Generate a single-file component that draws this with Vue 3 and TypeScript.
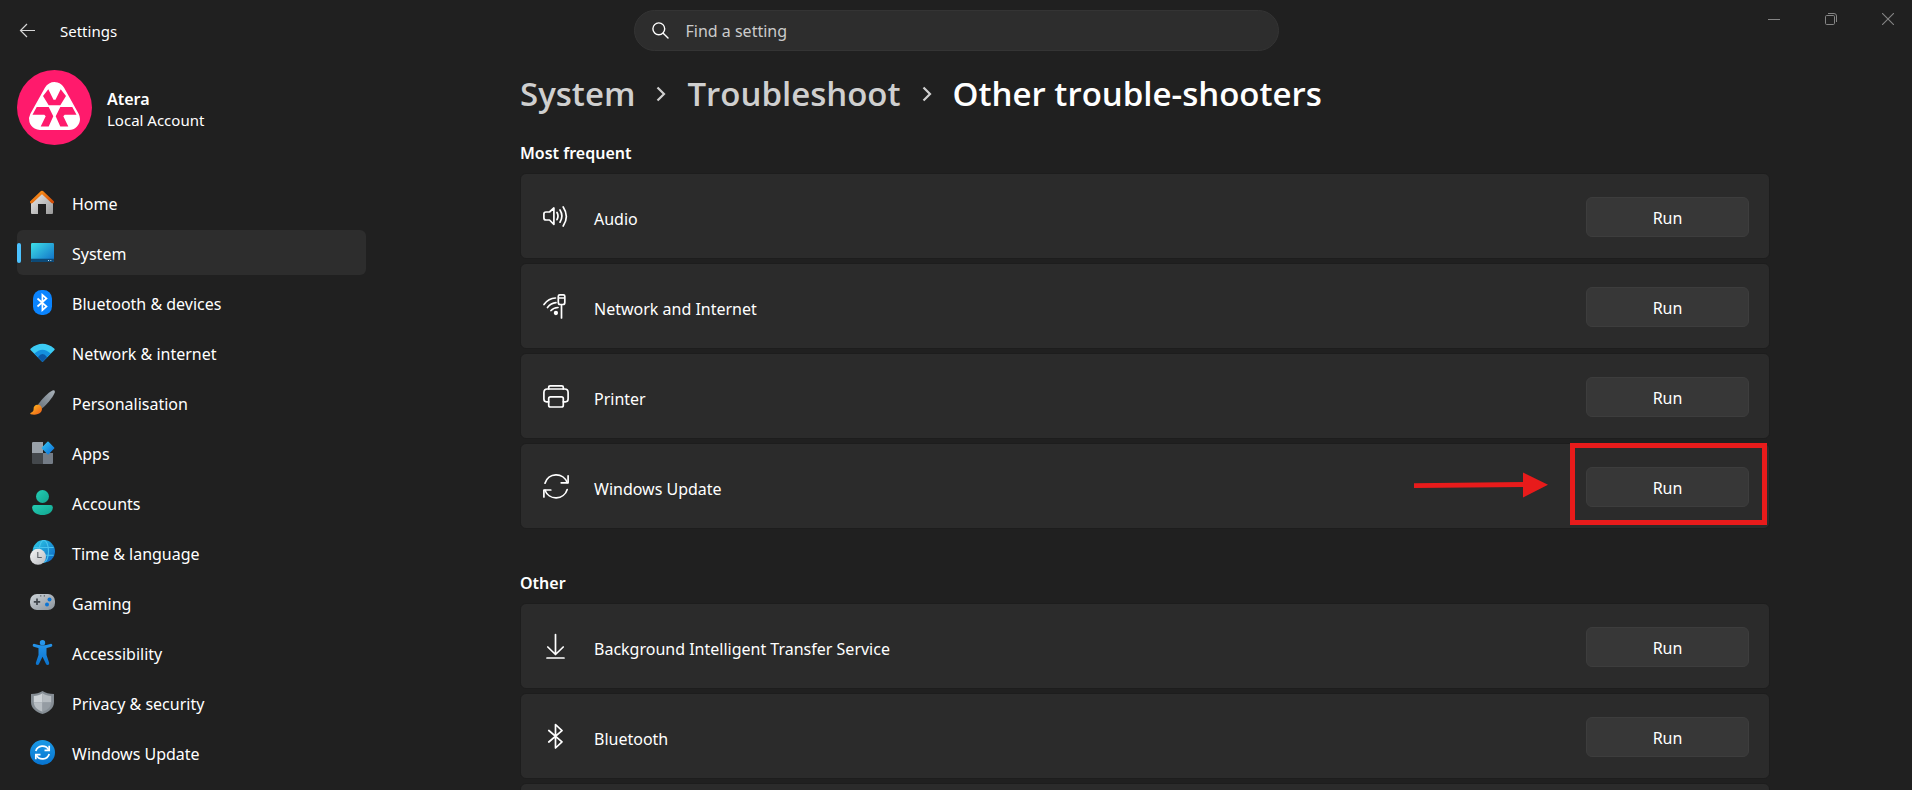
<script setup lang="ts">
import { ref } from 'vue'

interface NavItem {
  icon: string
  label: string
}

interface Group {
  title: string
  items: { icon: string; label: string; highlighted?: boolean }[]
  more?: boolean
}

const query = ref('')
const active = ref('System')

const navItems: NavItem[] = [
  { icon: 'home', label: 'Home' },
  { icon: 'system', label: 'System' },
  { icon: 'bluetooth', label: 'Bluetooth & devices' },
  { icon: 'network', label: 'Network & internet' },
  { icon: 'brush', label: 'Personalisation' },
  { icon: 'apps', label: 'Apps' },
  { icon: 'accounts', label: 'Accounts' },
  { icon: 'time', label: 'Time & language' },
  { icon: 'gaming', label: 'Gaming' },
  { icon: 'accessibility', label: 'Accessibility' },
  { icon: 'privacy', label: 'Privacy & security' },
  { icon: 'update', label: 'Windows Update' },
]

const groups: Group[] = [
  {
    title: 'Most frequent',
    items: [
      { icon: 'audio', label: 'Audio' },
      { icon: 'network', label: 'Network and Internet' },
      { icon: 'printer', label: 'Printer' },
      { icon: 'update', label: 'Windows Update', highlighted: true },
    ],
  },
  {
    title: 'Other',
    items: [
      { icon: 'download', label: 'Background Intelligent Transfer Service' },
      { icon: 'bluetooth', label: 'Bluetooth' },
    ],
    more: true,
  },
]
</script>

<template>
  <div class="window">
    <header class="titlebar">
      <div class="title">
        <button class="back" type="button" aria-label="Back">
          <svg width="17" height="15" viewBox="0 0 17 15" fill="none" stroke="#d6d6d6" stroke-width="1.2">
            <path d="M8 1 1.5 7.5 8 14M1.5 7.5H16" />
          </svg>
        </button>
        <span>Settings</span>
      </div>
      <label class="search">
        <svg width="17" height="17" viewBox="0 0 17 17" fill="none" stroke="#fff" stroke-width="1.4" stroke-linecap="round">
          <circle cx="6.8" cy="6.8" r="5.9" />
          <path d="M11.2 11.2 16 16" />
        </svg>
        <input v-model="query" type="text" placeholder="Find a setting" aria-label="Find a setting" />
      </label>
      <div class="controls">
        <button type="button" aria-label="Minimise">
          <svg width="12" height="12" viewBox="0 0 12 12"><path d="M0 6.5H12" stroke="#858585" /></svg>
        </button>
        <button type="button" aria-label="Restore">
          <svg width="12" height="12" viewBox="0 0 12 12" fill="none" stroke="#858585">
            <rect x=".5" y="2.5" width="9" height="9" rx="1.2" />
            <path d="M3 .5H9Q11.5 .5 11.5 3V9" />
          </svg>
        </button>
        <button type="button" aria-label="Close">
          <svg width="12" height="12" viewBox="0 0 12 12" stroke="#858585" stroke-width="1.1"><path d="M0 0 12 12M12 0 0 12" /></svg>
        </button>
      </div>
    </header>

    <div class="body">
      <aside class="sidebar">
        <div class="account">
          <svg class="avatar" width="75" height="75" viewBox="0 0 75 75">
            <circle cx="37.5" cy="37.5" r="37.5" fill="#ff1a6c" />
            <path d="M37.5 23 23 49H52Z" fill="#fff" stroke="#fff" stroke-width="22" stroke-linejoin="round" />
            <g fill="#ff1a6c">
              <path d="M31.3 19.3 26 26 31.7 35.3H43.3L49 26 43.7 19.3 38.5 29.7H36.5Z" />
              <path d="M19.7 37H31.7L36.3 46.3 31.7 56.5H23.7L28.7 46.3 27.3 44.7H15.5Z" />
              <path d="M55.3 37H43.3L38.7 46.3 43.3 56.5H51.3L46.3 46.3 47.7 44.7H59.5Z" />
            </g>
          </svg>
          <div class="account-text">
            <strong>Atera</strong>
            <span>Local Account</span>
          </div>
        </div>

        <nav class="nav" aria-label="Settings">
          <a
            v-for="item in navItems"
            :key="item.label"
            href="#"
            :class="['nav-item', { active: item.label === active }]"
            @click.prevent="active = item.label"
          >
            <svg width="25" height="25" viewBox="0 0 25 25" fill="none">
              <template v-if="item.icon === 'home'">
                <defs>
                  <linearGradient id="homeWall" x1="0" y1="0" x2="1" y2="1"><stop stop-color="#eee" /><stop offset="1" stop-color="#999" /></linearGradient>
                  <linearGradient id="homeRoof" x1="0" y1="0" x2="1" y2="1"><stop stop-color="#ff9a1c" /><stop offset="1" stop-color="#d24a05" /></linearGradient>
                </defs>
                <path d="M1 11.5 12 2 23 11.5V23Q23 24 22 24H16V14H8V24H2Q1 24 1 23Z" fill="url(#homeWall)" />
                <path d="M1.5 12 12 2.2 22.5 12" stroke="url(#homeRoof)" stroke-width="3" stroke-linecap="round" stroke-linejoin="round" />
              </template>
              <template v-else-if="item.icon === 'system'">
                <defs>
                  <linearGradient id="screen" x1="0" y1="0" x2="1" y2="1"><stop stop-color="#3ee0e8" /><stop offset="1" stop-color="#0f6cc6" /></linearGradient>
                </defs>
                <rect x="1" y="3" width="23" height="19" rx="1.2" fill="url(#screen)" />
                <path d="M1 18.7H24V20.8Q24 22 22.8 22H2.2Q1 22 1 20.8Z" fill="#0d4a77" />
                <path d="M18 20.5h1M20.3 20.5h1" stroke="#b9dcf2" />
              </template>
              <template v-else-if="item.icon === 'bluetooth'">
                <rect x="3" width="19" height="25" rx="8.5" fill="#0a84ff" />
                <path d="M7.5 8.5 16.5 16.5 12.4 20.2V4.8L16.5 8.5 7.5 16.5" stroke="#fff" stroke-width="1.7" />
              </template>
              <template v-else-if="item.icon === 'network'">
                <path d="M12.5 22 .8 10.2Q-.2 9.2 .8 8.4Q12.5 -.8 24.2 8.4Q25.2 9.2 24.2 10.2Z" fill="#3ccbf4" />
                <path d="M12.5 22 4.3 13.6Q12.5 5.8 20.7 13.6Z" fill="#1490df" />
                <path d="M12.5 22 7.9 17.2Q12.5 11 17.1 17.2Z" fill="#0b59a8" />
              </template>
              <template v-else-if="item.icon === 'brush'">
                <defs>
                  <linearGradient id="handle" x1="1" y1="0" x2="0" y2="1"><stop stop-color="#a9b2ba" /><stop offset="1" stop-color="#68727b" /></linearGradient>
                  <linearGradient id="paint" x1="0" y1="0" x2="1" y2="1"><stop stop-color="#ffc021" /><stop offset="1" stop-color="#ee5a18" /></linearGradient>
                </defs>
                <path d="M8 14.5C12 9 18 2.5 22.5 .4Q25.5 -.2 24.7 2.8C22.5 8 16.5 15 12 18.5Z" fill="url(#handle)" />
                <path d="M3.6 19C3.3 15.5 6.5 13.8 9.3 15.1 12 16.5 12.8 19.5 11 22 8.5 25 3.5 25 .8 24.2 0 23.8 .2 23 1 22.7 2.8 22 3.7 21 3.6 19Z" fill="url(#paint)" />
              </template>
              <template v-else-if="item.icon === 'apps'">
                <defs>
                  <linearGradient id="diamond" x1="0" y1="0" x2="1" y2="1"><stop stop-color="#35c4f4" /><stop offset="1" stop-color="#0a6fd8" /></linearGradient>
                </defs>
                <path d="M2.8 2H13V13H2V2.8Z" fill="#99a1a9" />
                <path d="M2 13H13V24H2.8L2 23.2Z" fill="#44484c" />
                <path d="M13 13H23V23.2L22.2 24H13Z" fill="#747c86" />
                <path d="M18 2.4 23.6 8 18 13.6 12.4 8Z" fill="url(#diamond)" stroke="url(#diamond)" stroke-width="1.6" stroke-linejoin="round" />
              </template>
              <template v-else-if="item.icon === 'accounts'">
                <defs>
                  <linearGradient id="person" x1="0" y1="0" x2="1" y2="1"><stop stop-color="#24cdb4" /><stop offset="1" stop-color="#12a48f" /></linearGradient>
                </defs>
                <circle cx="12.5" cy="6.5" r="6.5" fill="url(#person)" />
                <path d="M4.5 15H20.5Q22.8 15 22.8 17.3C22.8 22.5 18 25 12.5 25S2.2 22.5 2.2 17.3Q2.2 15 4.5 15Z" fill="url(#person)" />
              </template>
              <template v-else-if="item.icon === 'time'">
                <defs>
                  <linearGradient id="globe" x1="0" y1="0" x2="1" y2="1"><stop stop-color="#2fd0e6" /><stop offset="1" stop-color="#0a5fc4" /></linearGradient>
                  <linearGradient id="clock" x1="0" y1="0" x2="1" y2="1"><stop stop-color="#f6f6f6" /><stop offset="1" stop-color="#b9bcc0" /></linearGradient>
                </defs>
                <circle cx="13.8" cy="11.3" r="11.2" fill="url(#globe)" />
                <g stroke="#48c3ee" stroke-width="1.1">
                  <ellipse cx="13.8" cy="11.3" rx="4.7" ry="11" />
                  <path d="M4 7.5H23.6M6 15.3H23.6" />
                </g>
                <circle cx="8" cy="16.8" r="8" fill="url(#clock)" />
                <path d="M7.8 12V17.5H11.8" stroke="#5d6267" stroke-width="1.1" />
              </template>
              <template v-else-if="item.icon === 'gaming'">
                <defs>
                  <linearGradient id="pad" x1="0" y1="0" x2="1" y2="1"><stop stop-color="#cdd3d8" /><stop offset="1" stop-color="#8b939b" /></linearGradient>
                </defs>
                <rect y="4" width="25" height="16" rx="7" fill="url(#pad)" />
                <path d="M7 8.5V15M3.8 11.8H10.2" stroke="#40464c" stroke-width="1.7" />
                <path d="M10.3 5.8h1M13.8 5.8h1" stroke="#40464c" stroke-width="1.2" />
                <circle cx="19.5" cy="9.5" r="2" fill="#0c74d4" />
                <circle cx="17" cy="14.5" r="2" fill="#0c74d4" />
              </template>
              <template v-else-if="item.icon === 'accessibility'">
                <defs>
                  <linearGradient id="figure" x1="0" y1="0" x2="0" y2="25" gradientUnits="userSpaceOnUse"><stop stop-color="#2a9bf0" /><stop offset="1" stop-color="#0b72cc" /></linearGradient>
                </defs>
                <circle cx="12.5" cy="2.7" r="2.7" fill="url(#figure)" />
                <path d="M4.2 5.3Q12.5 8.5 20.8 5.3" stroke="url(#figure)" stroke-width="3" stroke-linecap="round" />
                <path d="M8.5 6.5H16.5V15L19.2 23Q19.4 25 17.7 25 16.3 25 15.9 23.8L12.5 16.8 9.1 23.8Q8.7 25 7.3 25 5.6 25 5.8 23L8.5 15Z" fill="url(#figure)" />
              </template>
              <template v-else-if="item.icon === 'privacy'">
                <path d="M12.5 1C15.5 3 19 4 24 4V12C24 18 19 22 12.5 24 6 22 1 18 1 12V4C6 4 9.5 3 12.5 1Z" fill="#858d94" />
                <path d="M12.5 3.2C9.5 5 7 5.8 3.8 6V12.5H12.5Z" fill="#cdd2d6" />
                <path d="M12.5 3.2C15.5 5 18 5.8 21.2 6V12.5H12.5Z" fill="#b5bbc0" />
                <path d="M3.8 12.5H12.5V21.8C7.5 20 4 17 3.8 12.5Z" fill="#b8bec3" />
                <path d="M21.2 12.5H12.5V21.8C17.5 20 21 17 21.2 12.5Z" fill="#959ca3" />
              </template>
              <template v-else>
                <defs>
                  <linearGradient id="sync" x1="0" y1="0" x2="0" y2="1"><stop stop-color="#1b9ae6" /><stop offset="1" stop-color="#0773cf" /></linearGradient>
                </defs>
                <circle cx="12.5" cy="12.5" r="12.5" fill="url(#sync)" />
                <g stroke="#fff" stroke-width="1.7">
                  <path d="M5.8 11A7 7 0 0 1 18.7 9.8M19.2 14A7 7 0 0 1 6.3 15.2" />
                  <path d="M19.2 5.8V10.3H14.5M5.8 19.2V14.7H10.5" />
                </g>
              </template>
            </svg>
            <span>{{ item.label }}</span>
          </a>
        </nav>
      </aside>

      <main class="content">
        <div class="page">
          <h1 class="crumbs">
            <a href="#" @click.prevent>System</a>
            <svg width="10" height="16" viewBox="0 0 10 16" fill="none" stroke="#cfcfcf" stroke-width="2.2"><path d="M1.5 1.5 8 8 1.5 14.5" /></svg>
            <a href="#" @click.prevent>Troubleshoot</a>
            <svg width="10" height="16" viewBox="0 0 10 16" fill="none" stroke="#cfcfcf" stroke-width="2.2"><path d="M1.5 1.5 8 8 1.5 14.5" /></svg>
            <span>Other trouble-shooters</span>
          </h1>

          <section v-for="group in groups" :key="group.title" class="group">
            <h2>{{ group.title }}</h2>
            <ul>
              <li v-for="item in group.items" :key="item.label" class="card">
                <svg class="glyph" width="26" height="26" viewBox="0 0 26 26" fill="none" stroke="#fff" stroke-width="1.7" stroke-linecap="round" stroke-linejoin="round">
                  <template v-if="item.icon === 'audio'">
                    <path d="M10.9 5V21.3L6.5 17H3Q.9 17 .9 15V11Q.9 9 3 9H6.5Z" />
                    <path d="M14 9.5Q16 13 14 16.7M17 7Q20.8 13 17 19.2M20.2 4Q26.5 13.5 20.2 23" />
                  </template>
                  <template v-else-if="item.icon === 'network'">
                    <path d="M1 11.5Q5.5 5.2 12.5 5M4.5 14.5Q8 10 13 9.7M8 17.5Q10.5 14.7 15 14.5" />
                    <circle cx="12.9" cy="20" r="1.3" fill="#fff" />
                    <path d="M18.5 11.5V25M15.3 5H21.8V9.5Q21.8 11.5 20 11.5H17Q15.3 11.5 15.3 9.5ZM15.3 5V3.2Q15.3 1.8 16.7 1.8H20.4Q21.8 1.8 21.8 3.2V5" />
                  </template>
                  <template v-else-if="item.icon === 'printer'">
                    <path d="M5.7 18.8H3.5Q.9 18.8 .9 16.1V9.5Q.9 6 4.3 6H21.7Q25.1 6 25.1 9.5V16.1Q25.1 18.8 22.5 18.8H20.3" />
                    <path d="M5.7 6V4.3Q5.7 2.8 7.2 2.8H18.8Q20.3 2.8 20.3 4.3V6" />
                    <rect x="5.7" y="13.8" width="14.6" height="10.2" rx="1.8" />
                  </template>
                  <template v-else-if="item.icon === 'update'">
                    <path d="M2 10.2A11.7 11.7 0 0 1 24.2 9.5M24.2 16.5A11.7 11.7 0 0 1 2 17.2" />
                    <path d="M25.1 2.8V9.8H18.2M.9 24V17H7.8" />
                  </template>
                  <template v-else-if="item.icon === 'download'">
                    <path d="M12.5 1.5V21M4.8 14 12.5 21.5 20.2 14M4 25H21" />
                  </template>
                  <template v-else>
                    <path d="M5.8 7.5 19 18.8 12.5 25V1.5L19 7.7 5.8 19" />
                  </template>
                </svg>
                <span class="label">{{ item.label }}</span>
                <div class="action">
                  <button type="button" class="run">Run</button>
                  <template v-if="item.highlighted">
                    <span class="frame" />
                    <svg class="arrow" width="134" height="26" viewBox="0 0 134 26" fill="#e81b1b">
                      <path d="M0 11.2 109 10V.5L134 12.8 109 25.5V15L0 16Z" />
                    </svg>
                  </template>
                </div>
              </li>
              <li v-if="group.more" class="card" aria-hidden="true" />
            </ul>
          </section>
        </div>
      </main>
    </div>
  </div>
</template>

<style>
body {
  margin: 0;
  background: #202020;
}
</style>

<style scoped>
.window {
  display: flex;
  flex-direction: column;
  height: 100vh;
  overflow: hidden;
  background: #202020;
  color: #fff;
  font-family: "Noto Sans", "Open Sans", sans-serif;
  font-size: 16px;
}

button {
  border: 0;
  padding: 0;
  background: none;
  color: inherit;
  font: inherit;
}

a {
  color: inherit;
  text-decoration: none;
}

.titlebar {
  display: grid;
  grid-template-columns: 1fr minmax(0, 645px) 1fr;
  flex: none;
  height: 61px;
}

.title {
  display: flex;
  align-items: center;
  gap: 19px;
  padding-left: 13px;
  font-size: 15px;
}

.back {
  display: grid;
  place-items: center;
  width: 28px;
  height: 28px;
}

.search {
  display: flex;
  align-items: center;
  gap: 17px;
  box-sizing: border-box;
  height: 41px;
  margin-top: 10px;
  padding: 0 17px;
  border: 1px solid #343434;
  border-radius: 21px;
  background: #2d2d2d;
}

.search input {
  flex: 1;
  min-width: 0;
  padding: 0;
  border: 0;
  outline: 0;
  background: none;
  color: #fff;
  font: inherit;
}

.search input::placeholder {
  color: #cbcbcb;
  opacity: 1;
}

.controls {
  display: flex;
  justify-content: flex-end;
  gap: 9px;
}

.controls button {
  display: grid;
  place-items: center;
  width: 48px;
  height: 38px;
}

.body {
  display: flex;
  flex: 1;
  min-height: 0;
}

.sidebar {
  flex: none;
  box-sizing: border-box;
  width: 378px;
  padding: 9px 12px 0 17px;
}

.account {
  display: flex;
  align-items: center;
  gap: 15px;
}

.account-text {
  display: flex;
  flex-direction: column;
  padding-top: 4px;
  line-height: 21px;
}

.account-text strong {
  font-weight: 600;
}

.account-text span {
  font-size: 15px;
}

.nav {
  display: flex;
  flex-direction: column;
  gap: 5px;
  margin-top: 35px;
}

.nav-item {
  position: relative;
  display: flex;
  align-items: center;
  gap: 17px;
  height: 45px;
  padding-left: 13px;
  border-radius: 6px;
}

.nav-item span {
  padding-top: 2px;
}

.nav-item.active {
  background: #2d2d2d;
}

.nav-item.active::before {
  content: "";
  position: absolute;
  left: 0;
  top: 13px;
  width: 4px;
  height: 20px;
  border-radius: 2px;
  background: #4cc2ff;
}

.content {
  flex: 1;
  min-width: 0;
  overflow: hidden;
}

.page {
  max-width: 1250px;
  margin: 0 auto;
  padding-top: 9px;
}

.crumbs {
  display: flex;
  align-items: center;
  gap: 21px;
  margin: 0 0 23px;
  font-family: "Open Sans", "Noto Sans", sans-serif;
  font-size: 33px;
  font-weight: 600;
  line-height: 48px;
}

.crumbs a {
  color: #cfcfcf;
}

.group {
  margin-bottom: 42px;
}

.group h2 {
  margin: 0 0 8px;
  font-size: 16px;
  font-weight: 600;
  line-height: 24px;
}

.group ul {
  display: flex;
  flex-direction: column;
  gap: 4px;
  margin: 0;
  padding: 0;
  list-style: none;
}

.card {
  display: flex;
  align-items: center;
  box-sizing: border-box;
  height: 86px;
  padding: 0 20px 0 22px;
  border: 1px solid #1d1d1d;
  border-radius: 6px;
  background: #2b2b2b;
}

.glyph {
  flex: none;
  margin-right: 25px;
}

.label {
  flex: 1;
  padding-top: 6px;
}

.action {
  position: relative;
  padding-top: 2px;
}

.run {
  display: block;
  width: 163px;
  height: 40px;
  padding-top: 2px;
  border: 1px solid #3d3d3d;
  border-radius: 6px;
  background: #373737;
}

.frame {
  position: absolute;
  left: -16px;
  top: -22px;
  box-sizing: border-box;
  width: 197px;
  height: 82px;
  border: 5px solid #e81b1b;
  pointer-events: none;
}

.arrow {
  position: absolute;
  right: 201px;
  top: 7px;
}
</style>
